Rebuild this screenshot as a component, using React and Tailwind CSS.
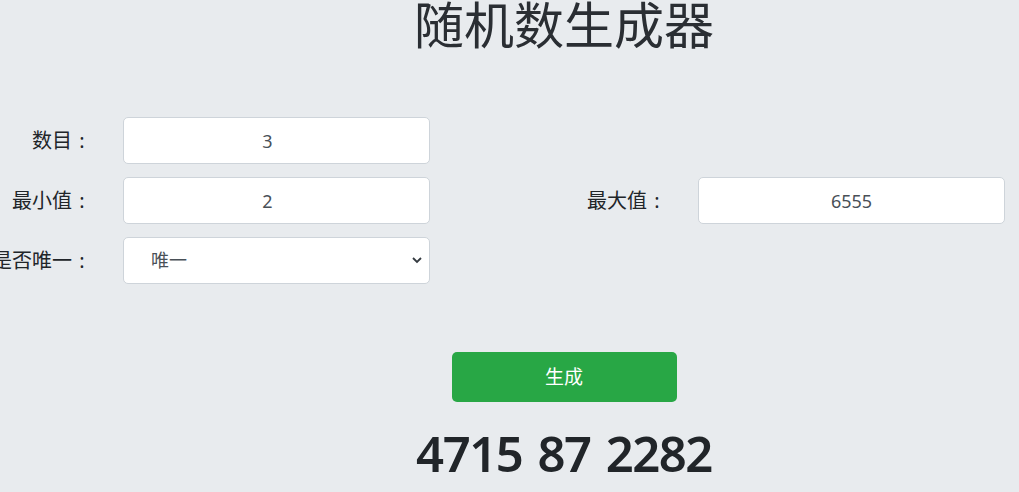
import React, { useState } from "react";

const cjk = { fontFamily: '"Noto Sans", "Noto Sans CJK SC", sans-serif' };

const Field = ({ label, children }) => (
  <div className="flex items-center">
    <label className="w-[103px] shrink-0 text-right text-[20px] text-[#212529] whitespace-nowrap">
      {label}
      <span className="inline-block w-[20px] text-center">:</span>
    </label>
    <div className="ml-[31px] w-[307px]">{children}</div>
  </div>
);

const App = () => {
  const [count, setCount] = useState("3");
  const [min, setMin] = useState("2");
  const [max, setMax] = useState("6555");
  const [unique, setUnique] = useState("unique");

  const inputClass =
    "w-full h-[47px] rounded-[5px] border border-[#ced4da] bg-white text-center text-[18px] text-[#495057] outline-none";

  return (
    <div className="w-[1019px] h-[492px] overflow-hidden bg-[#e8ebee]" style={cjk}>
      <div className="w-[1150px] -ml-[11px]">
        <h1 className="text-center text-[50px] leading-[56px] text-[#2a2e33] -mt-[3px]">随机数生成器</h1>

        <div className="mt-[64px] grid grid-cols-2 gap-y-[13px]">
          <Field label="数目">
            <input value={count} onChange={(e) => setCount(e.target.value)} className={inputClass + " pr-[18px]"} />
          </Field>
          <div />
          <Field label="最小值">
            <input value={min} onChange={(e) => setMin(e.target.value)} className={inputClass + " pr-[18px]"} />
          </Field>
          <Field label="最大值">
            <input value={max} onChange={(e) => setMax(e.target.value)} className={inputClass} />
          </Field>
          <Field label="是否唯一">
            <div className="relative">
              <select
                value={unique}
                onChange={(e) => setUnique(e.target.value)}
                className="w-full h-[47px] appearance-none rounded-[5px] border border-[#ced4da] bg-white pl-[27px] text-[18px] text-[#495057] outline-none"
              >
                <option value="unique">唯一</option>
                <option value="repeat">可重复</option>
              </select>
              <svg className="pointer-events-none absolute right-[8px] top-[20px]" width="10" height="7" viewBox="0 0 10 7">
                <polyline points="1,1 5,5 9,1" fill="none" stroke="#343a40" strokeWidth="1.8" />
              </svg>
            </div>
          </Field>
        </div>

        <div className="mt-[68px] flex justify-center">
          <button className="w-[225px] h-[50px] rounded-[5px] bg-[#28a745] text-[19px] text-white">生成</button>
        </div>

        <div className="mt-[21px] text-center text-[49px] leading-[60px] font-semibold tracking-[-1.5px] [word-spacing:4px] text-[#212529]">
          4715 87 2282
        </div>
      </div>
    </div>
  );
};

export default App;
